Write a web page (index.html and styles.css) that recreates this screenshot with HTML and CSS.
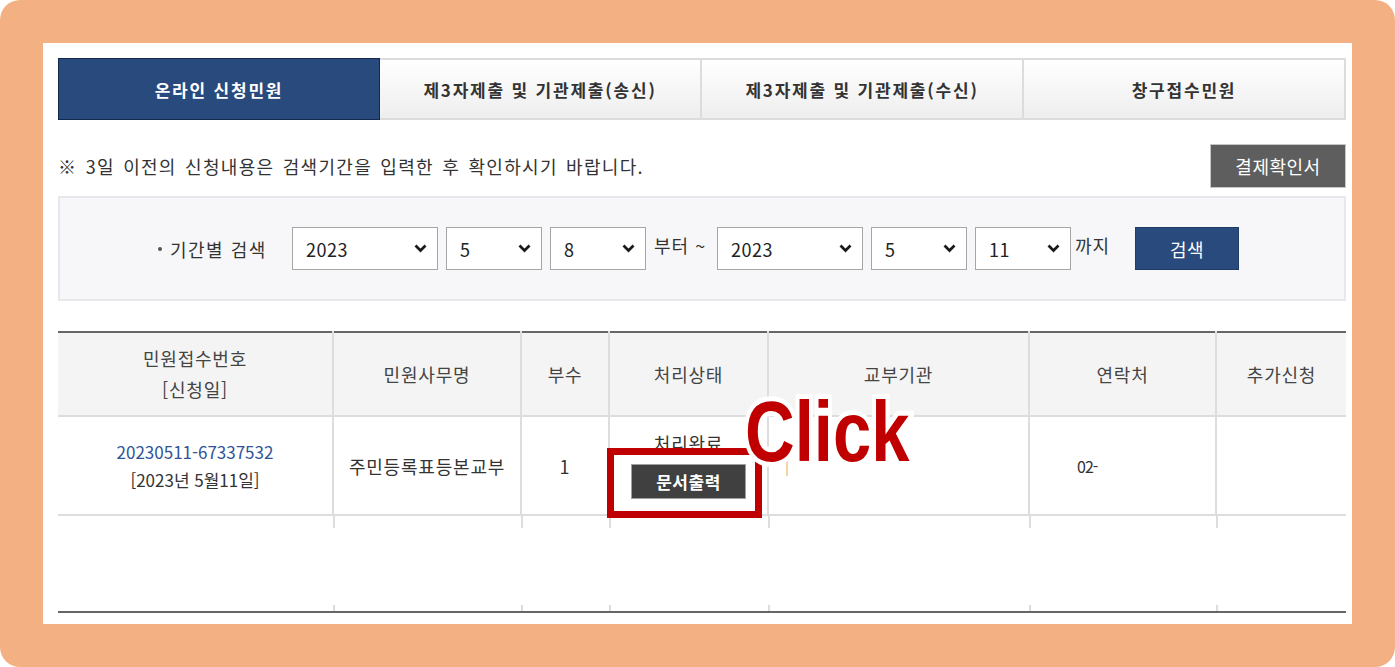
FILE: index.html
```html
<!DOCTYPE html>
<html lang="ko">
  <head>
    <meta charset="UTF-8" />
    <meta name="viewport" content="width=device-width, initial-scale=1.0" />
    <title>민원신청내역</title>
    <link rel="stylesheet" href="styles.css">
  </head>
  <body>
    <div class="frame">
      <div class="panel">
        <!-- Tabs -->
        <ul class="tabs">
          <li class="tab active">온라인 신청민원</li>
          <li class="tab">제3자제출 및 기관제출(송신)</li>
          <li class="tab">제3자제출 및 기관제출(수신)</li>
          <li class="tab">창구접수민원</li>
        </ul>

        <div class="notice-row">
          <p class="notice">※ 3일 이전의 신청내용은 검색기간을 입력한 후 확인하시기 바랍니다.</p>
          <button class="btn-receipt">결제확인서</button>
        </div>

        <!-- Period search -->
        <div class="search-box">
          <span class="search-label">기간별 검색</span>
          <div class="select year"><span>2023</span><svg width="13" height="9" viewBox="0 0 13 9"><polyline points="1.5,1.5 6.5,6.5 11.5,1.5" /></svg></div>
          <div class="select small"><span>5</span><svg width="13" height="9" viewBox="0 0 13 9"><polyline points="1.5,1.5 6.5,6.5 11.5,1.5" /></svg></div>
          <div class="select small"><span>8</span><svg width="13" height="9" viewBox="0 0 13 9"><polyline points="1.5,1.5 6.5,6.5 11.5,1.5" /></svg></div>
          <span class="word from">부터 ~</span>
          <div class="select year"><span>2023</span><svg width="13" height="9" viewBox="0 0 13 9"><polyline points="1.5,1.5 6.5,6.5 11.5,1.5" /></svg></div>
          <div class="select small"><span>5</span><svg width="13" height="9" viewBox="0 0 13 9"><polyline points="1.5,1.5 6.5,6.5 11.5,1.5" /></svg></div>
          <div class="select small"><span>11</span><svg width="13" height="9" viewBox="0 0 13 9"><polyline points="1.5,1.5 6.5,6.5 11.5,1.5" /></svg></div>
          <span class="word until">까지</span>
          <button class="btn-search">검색</button>
        </div>

        <!-- Result list -->
        <table class="list">
          <colgroup>
            <col class="c-no">
            <col class="c-name">
            <col class="c-count">
            <col class="c-state">
            <col class="c-org">
            <col class="c-tel">
            <col class="c-extra">
          </colgroup>
          <thead>
            <tr>
              <th>민원접수번호<br>[신청일]</th>
              <th>민원사무명</th>
              <th>부수</th>
              <th>처리상태</th>
              <th>교부기관</th>
              <th>연락처</th>
              <th>추가신청</th>
            </tr>
          </thead>
          <tbody>
            <tr class="data">
              <td class="receipt"><a href="#" class="num">20230511-67337532</a><br>[2023년 5월11일]</td>
              <td>주민등록표등본교부</td>
              <td>1</td>
              <td>
                <div class="state">처리완료</div>
                <button class="btn-print">문서출력</button>
              </td>
              <td class="org"><span class="blur"></span></td>
              <td class="tel">02-</td>
              <td></td>
            </tr>
            <tr class="gap">
              <td></td><td></td><td></td><td></td><td></td><td></td><td></td>
            </tr>
          </tbody>
        </table>

        <!-- Guide marks -->
        <div class="mark-box"></div>
        <div class="mark-text">Click</div>
      </div>
    </div>
  </body>
</html>
```

FILE: styles.css
```css
* {
  box-sizing: border-box;
  margin: 0;
  padding: 0;
}

body {
  background: #fff;
  font-family: "Noto Sans CJK KR", "Liberation Sans", sans-serif;
  color: #333;
}

.frame {
  width: 1395px;
  height: 667px;
  padding: 43px;
  background: #f3b183;
  border-radius: 20px;
}

.panel {
  position: relative;
  height: 581px;
  padding: 15px 6px 0 15px;
  background: #fff;
}

/* Tabs */
.tabs {
  display: flex;
  list-style: none;
  height: 62px;
}

.tab {
  flex: 1 1 0;
  display: flex;
  align-items: center;
  justify-content: center;
  font-size: 17px;
  font-weight: bold;
  color: #333;
  letter-spacing: 1.8px;
  background: linear-gradient(#fff, #eeeeee);
  border: 2px solid #dcdcdc;
  border-left: none;
}

.tab.active {
  color: #fff;
  background: #284a7c;
  border: 1px solid #13284a;
}

/* Notice */
.notice-row {
  display: flex;
  align-items: center;
  justify-content: space-between;
  height: 44px;
  margin: 24px 0 8px;
}

.notice {
  font-size: 18px;
  color: #333;
  letter-spacing: 1.3px;
  word-spacing: 2px;
}

.btn-receipt {
  width: 136px;
  height: 44px;
  font-family: inherit;
  font-size: 18px;
  letter-spacing: 0.5px;
  color: #fff;
  background: #5e5e5e;
  border: 1px solid #c6c6c6;
}

/* Search box */
.search-box {
  display: flex;
  align-items: center;
  height: 105px;
  padding-left: 98px;
  background: #f7f7f9;
  border: 2px solid #e8e8ec;
}

.search-label {
  display: flex;
  align-items: center;
  width: 114px;
  margin-right: 20px;
  font-size: 18px;
  letter-spacing: 1.5px;
  white-space: nowrap;
  color: #333;
}

.search-label::before {
  content: "";
  flex: none;
  width: 4px;
  height: 4px;
  margin-right: 8px;
  background: #555;
  border-radius: 50%;
}

.select {
  display: flex;
  align-items: center;
  justify-content: space-between;
  height: 43px;
  margin-right: 8px;
  padding: 0 10px 0 13px;
  font-size: 18px;
  letter-spacing: 0.5px;
  color: #222;
  background: #fff;
  border: 1px solid #a6a6a6;
}

.select.year {
  width: 146px;
}

.select.small {
  width: 96px;
}

.select svg polyline {
  fill: none;
  stroke: #1a1a1a;
  stroke-width: 2.7;
}

.word {
  font-size: 18px;
  letter-spacing: 1px;
  white-space: nowrap;
  color: #333;
  margin-bottom: 8px;
}

.word.from {
  width: 58px;
  margin-right: 5px;
}

.word.until {
  width: 38px;
  margin-left: -4px;
  margin-right: 22px;
}

.btn-search {
  width: 104px;
  height: 43px;
  font-family: inherit;
  font-size: 18px;
  letter-spacing: 0.5px;
  color: #fff;
  background: #284a7c;
  border: 1px solid #1f3b66;
}

/* Table */
.list {
  width: 1288px;
  margin-top: 30px;
  border-collapse: collapse;
  table-layout: fixed;
  border-top: 2px solid #666;
  border-bottom: 2px solid #666;
}

.c-no { width: 275px; }
.c-name { width: 188px; }
.c-count { width: 88px; }
.c-state { width: 159px; }
.c-org { width: 261px; }
.c-tel { width: 187px; }
.c-extra { width: 130px; }

.list th,
.list td {
  font-size: 18px;
  letter-spacing: 0.8px;
  text-align: center;
  vertical-align: middle;
  border-left: 2px solid #dddddd;
}

.list th:first-child,
.list td:first-child {
  border-left: none;
}

.list th {
  height: 84px;
  font-weight: normal;
  color: #444;
  line-height: 31px;
  background: #f4f4f4;
  border-bottom: 2px solid #dddddd;
}

.list .data td {
  height: 99px;
  color: #333;
  border-bottom: 2px solid #dddddd;
}

.list td.receipt {
  font-size: 17px;
  letter-spacing: 0;
  line-height: 28px;
}

.num {
  color: #2f5496;
  text-decoration: none;
}

.state {
  line-height: 24px;
  margin-top: -2px;
}

.btn-print {
  width: 115px;
  height: 35px;
  margin-top: 9px;
  font-family: inherit;
  font-size: 17px;
  font-weight: bold;
  letter-spacing: 0.5px;
  color: #fff;
  background: #404040;
  border: 1px solid #a0a0a0;
}

.list td.org {
  text-align: left;
  padding-left: 17px;
}

.blur {
  display: inline-block;
  width: 2px;
  height: 16px;
  margin-top: 10px;
  background: #f1d3a6;
}

.list td.tel {
  text-align: left;
  padding-left: 47px;
  font-size: 16px;
  letter-spacing: -1px;
}

.list .gap td {
  height: 97px;
  border-left: none;
  background:
    linear-gradient(#dddddd, #dddddd) left top / 2px 12px no-repeat,
    linear-gradient(#dddddd, #dddddd) left bottom / 2px 6px no-repeat;
}

.list .gap td:first-child {
  background: none;
}

/* Guide marks over the list */
.mark-box {
  position: absolute;
  left: 564px;
  top: 405px;
  width: 155px;
  height: 70px;
  border: 7px solid #c00000;
}

.mark-text {
  position: absolute;
  left: 702px;
  top: 345px;
  font-family: "Liberation Sans", sans-serif;
  font-size: 86px;
  font-weight: bold;
  line-height: 1;
  color: #c00000;
  -webkit-text-stroke: 10px #fff;
  paint-order: stroke fill;
  transform: scaleX(0.8);
  transform-origin: left top;
}
```
